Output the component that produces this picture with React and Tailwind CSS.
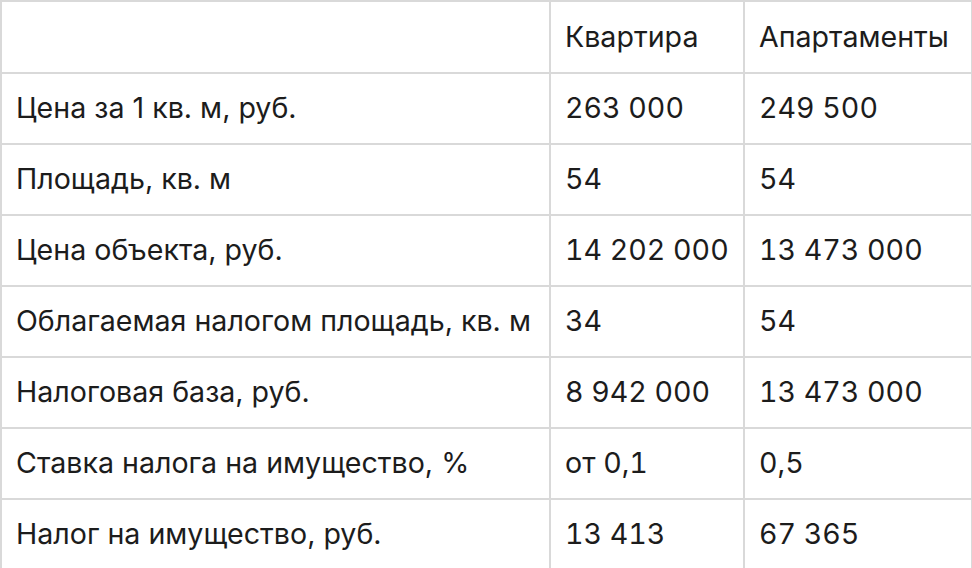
const rows = [
  ["Цена за 1 кв. м, руб.", "263 000", "249 500"],
  ["Площадь, кв. м", "54", "54"],
  ["Цена объекта, руб.", "14 202 000", "13 473 000"],
  ["Облагаемая налогом площадь, кв. м", "34", "54"],
  ["Налоговая база, руб.", "8 942 000", "13 473 000"],
  ["Ставка налога на имущество, %", "от 0,1", "0,5"],
  ["Налог на имущество, руб.", "13 413", "67 365"],
];

const cell = "border-2 border-[#d9d9d9] px-[14px] text-left align-middle font-normal";

function App() {
  return (
    <div className="w-[972px] h-[568px] overflow-hidden bg-white font-['Inter',sans-serif] text-[28.6px] text-[#1c1c1c]">
      <table className="table-fixed border-collapse w-[971px]">
        <colgroup>
          <col className="w-[549px]" />
          <col className="w-[194px]" />
          <col className="w-[228px]" />
        </colgroup>
        <thead>
          <tr className="h-[72px]">
            <th className={cell}></th>
            <th className={cell}>Квартира</th>
            <th className={cell}>Апартаменты</th>
          </tr>
        </thead>
        <tbody>
          {rows.map((row, idx) => (
            <tr className="h-[71px]" key={idx}>
              {row.map((val, i) => (
                <td className={i === 0 ? cell : cell + " tabular-nums"} key={i}>
                  {val}
                </td>
              ))}
            </tr>
          ))}
        </tbody>
      </table>
    </div>
  );
}

export default App;
